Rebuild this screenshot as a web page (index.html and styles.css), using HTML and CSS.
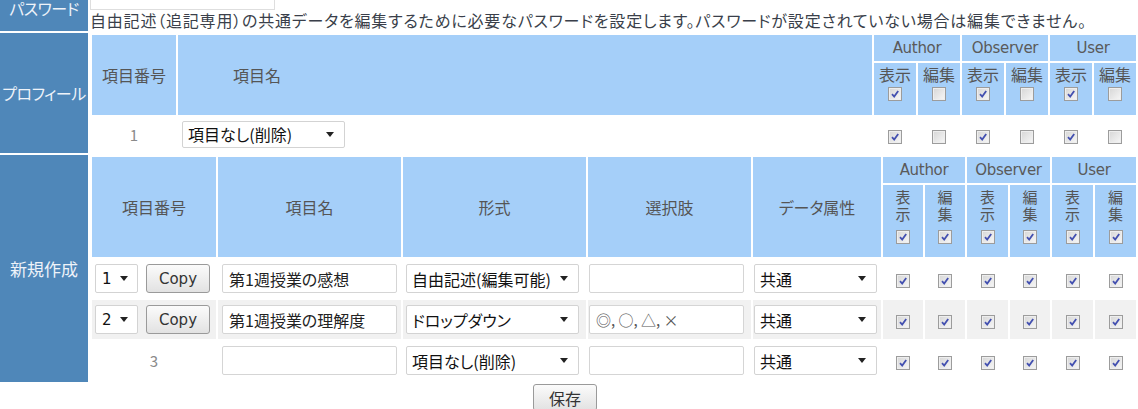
FILE: index.html
```html
<!DOCTYPE html>
<html lang="ja">
<head>
<meta charset="utf-8">
<title>設定</title>
<link rel="stylesheet" href="styles.css">
</head>
<body>
<div class="page">
  <div class="label">パスワード</div>
  <div class="pass-body">
    <div class="pw-input"></div>
    <p class="desc">自由記述（追記専用）の共通データを編集するために必要なパスワードを設定します。パスワードが設定されていない場合は編集できません。</p>
  </div>

  <div class="label">プロフィール</div>
  <div class="body">
    <table class="tbl prof">
      <colgroup>
        <col class="pc-no"><col class="pc-name">
        <col class="pc-cb"><col class="pc-cb"><col class="pc-cb"><col class="pc-cb"><col class="pc-cb"><col class="pc-cb">
      </colgroup>
      <tr class="g-row">
        <th rowspan="2">項目番号</th>
        <th rowspan="2" class="th-left">項目名</th>
        <th colspan="2" class="grp">Author</th>
        <th colspan="2" class="grp">Observer</th>
        <th colspan="2" class="grp">User</th>
      </tr>
      <tr class="ps-row">
        <th class="sub"><div class="sub-txt">表示</div><span class="cb on"><svg viewBox="0 0 12 12"><path d="M3 6.2 L5.2 8.6 L9.2 3"/></svg></span></th>
        <th class="sub"><div class="sub-txt">編集</div><span class="cb"></span></th>
        <th class="sub"><div class="sub-txt">表示</div><span class="cb on"><svg viewBox="0 0 12 12"><path d="M3 6.2 L5.2 8.6 L9.2 3"/></svg></span></th>
        <th class="sub"><div class="sub-txt">編集</div><span class="cb"></span></th>
        <th class="sub"><div class="sub-txt">表示</div><span class="cb on"><svg viewBox="0 0 12 12"><path d="M3 6.2 L5.2 8.6 L9.2 3"/></svg></span></th>
        <th class="sub"><div class="sub-txt">編集</div><span class="cb"></span></th>
      </tr>
      <tr class="pd-row">
        <td class="num">1</td>
        <td class="td-left"><div class="sel w-prof"><span class="sel-txt">項目なし(削除)</span><span class="arr"></span></div></td>
        <td><span class="cb on"><svg viewBox="0 0 12 12"><path d="M3 6.2 L5.2 8.6 L9.2 3"/></svg></span></td>
        <td><span class="cb"></span></td>
        <td><span class="cb on"><svg viewBox="0 0 12 12"><path d="M3 6.2 L5.2 8.6 L9.2 3"/></svg></span></td>
        <td><span class="cb"></span></td>
        <td><span class="cb on"><svg viewBox="0 0 12 12"><path d="M3 6.2 L5.2 8.6 L9.2 3"/></svg></span></td>
        <td><span class="cb"></span></td>
      </tr>
    </table>
  </div>

  <div class="label label-lg">新規作成</div>
  <div class="body">
    <table class="tbl newt">
      <colgroup>
        <col class="nc-no"><col class="nc-name"><col class="nc-fmt"><col class="nc-opt"><col class="nc-attr">
        <col class="nc-a"><col class="nc-a"><col class="nc-b"><col class="nc-a"><col class="nc-b"><col class="nc-b">
      </colgroup>
      <tr class="g-row">
        <th rowspan="2">項目番号</th>
        <th rowspan="2">項目名</th>
        <th rowspan="2">形式</th>
        <th rowspan="2">選択肢</th>
        <th rowspan="2">データ属性</th>
        <th colspan="2" class="grp">Author</th>
        <th colspan="2" class="grp">Observer</th>
        <th colspan="2" class="grp">User</th>
      </tr>
      <tr class="ns-row">
        <th class="sub"><div class="sub-txt v">表<br>示</div><span class="cb on"><svg viewBox="0 0 12 12"><path d="M3 6.2 L5.2 8.6 L9.2 3"/></svg></span></th>
        <th class="sub"><div class="sub-txt v">編<br>集</div><span class="cb on"><svg viewBox="0 0 12 12"><path d="M3 6.2 L5.2 8.6 L9.2 3"/></svg></span></th>
        <th class="sub"><div class="sub-txt v">表<br>示</div><span class="cb on"><svg viewBox="0 0 12 12"><path d="M3 6.2 L5.2 8.6 L9.2 3"/></svg></span></th>
        <th class="sub"><div class="sub-txt v">編<br>集</div><span class="cb on"><svg viewBox="0 0 12 12"><path d="M3 6.2 L5.2 8.6 L9.2 3"/></svg></span></th>
        <th class="sub"><div class="sub-txt v">表<br>示</div><span class="cb on"><svg viewBox="0 0 12 12"><path d="M3 6.2 L5.2 8.6 L9.2 3"/></svg></span></th>
        <th class="sub"><div class="sub-txt v">編<br>集</div><span class="cb on"><svg viewBox="0 0 12 12"><path d="M3 6.2 L5.2 8.6 L9.2 3"/></svg></span></th>
      </tr>
      <tr class="nd-row">
        <td class="td-left"><div class="nobox"><div class="sel w-num"><span class="sel-txt">1</span><span class="arr"></span></div><button class="btn">Copy</button></div></td>
        <td class="td-left"><input class="inp w-name" value="第1週授業の感想"></td>
        <td class="td-left"><div class="sel w-fmt"><span class="sel-txt">自由記述(編集可能)</span><span class="arr"></span></div></td>
        <td class="td-left"><input class="inp w-opt" value=""></td>
        <td class="td-left"><div class="sel w-attr"><span class="sel-txt">共通</span><span class="arr"></span></div></td>
        <td><span class="cb on"><svg viewBox="0 0 12 12"><path d="M3 6.2 L5.2 8.6 L9.2 3"/></svg></span></td>
        <td><span class="cb on"><svg viewBox="0 0 12 12"><path d="M3 6.2 L5.2 8.6 L9.2 3"/></svg></span></td>
        <td><span class="cb on"><svg viewBox="0 0 12 12"><path d="M3 6.2 L5.2 8.6 L9.2 3"/></svg></span></td>
        <td><span class="cb on"><svg viewBox="0 0 12 12"><path d="M3 6.2 L5.2 8.6 L9.2 3"/></svg></span></td>
        <td><span class="cb on"><svg viewBox="0 0 12 12"><path d="M3 6.2 L5.2 8.6 L9.2 3"/></svg></span></td>
        <td><span class="cb on"><svg viewBox="0 0 12 12"><path d="M3 6.2 L5.2 8.6 L9.2 3"/></svg></span></td>
      </tr>
      <tr class="nd-row alt">
        <td class="td-left"><div class="nobox"><div class="sel w-num"><span class="sel-txt">2</span><span class="arr"></span></div><button class="btn">Copy</button></div></td>
        <td class="td-left"><input class="inp w-name" value="第1週授業の理解度"></td>
        <td class="td-left"><div class="sel w-fmt"><span class="sel-txt">ドロップダウン</span><span class="arr"></span></div></td>
        <td class="td-left"><input class="inp w-opt sym" value="◎, ○, △, ×"></td>
        <td class="td-left"><div class="sel w-attr"><span class="sel-txt">共通</span><span class="arr"></span></div></td>
        <td><span class="cb on"><svg viewBox="0 0 12 12"><path d="M3 6.2 L5.2 8.6 L9.2 3"/></svg></span></td>
        <td><span class="cb on"><svg viewBox="0 0 12 12"><path d="M3 6.2 L5.2 8.6 L9.2 3"/></svg></span></td>
        <td><span class="cb on"><svg viewBox="0 0 12 12"><path d="M3 6.2 L5.2 8.6 L9.2 3"/></svg></span></td>
        <td><span class="cb on"><svg viewBox="0 0 12 12"><path d="M3 6.2 L5.2 8.6 L9.2 3"/></svg></span></td>
        <td><span class="cb on"><svg viewBox="0 0 12 12"><path d="M3 6.2 L5.2 8.6 L9.2 3"/></svg></span></td>
        <td><span class="cb on"><svg viewBox="0 0 12 12"><path d="M3 6.2 L5.2 8.6 L9.2 3"/></svg></span></td>
      </tr>
      <tr class="nd-row">
        <td class="num">3</td>
        <td class="td-left"><input class="inp w-name" value=""></td>
        <td class="td-left"><div class="sel w-fmt"><span class="sel-txt">項目なし(削除)</span><span class="arr"></span></div></td>
        <td class="td-left"><input class="inp w-opt" value=""></td>
        <td class="td-left"><div class="sel w-attr"><span class="sel-txt">共通</span><span class="arr"></span></div></td>
        <td><span class="cb on"><svg viewBox="0 0 12 12"><path d="M3 6.2 L5.2 8.6 L9.2 3"/></svg></span></td>
        <td><span class="cb on"><svg viewBox="0 0 12 12"><path d="M3 6.2 L5.2 8.6 L9.2 3"/></svg></span></td>
        <td><span class="cb on"><svg viewBox="0 0 12 12"><path d="M3 6.2 L5.2 8.6 L9.2 3"/></svg></span></td>
        <td><span class="cb on"><svg viewBox="0 0 12 12"><path d="M3 6.2 L5.2 8.6 L9.2 3"/></svg></span></td>
        <td><span class="cb on"><svg viewBox="0 0 12 12"><path d="M3 6.2 L5.2 8.6 L9.2 3"/></svg></span></td>
        <td><span class="cb on"><svg viewBox="0 0 12 12"><path d="M3 6.2 L5.2 8.6 L9.2 3"/></svg></span></td>
      </tr>
    </table>
  </div>
</div>
<div class="save-row"><button class="btn save">保存</button></div>
</body>
</html>
```

FILE: styles.css
```css
* { box-sizing: border-box; }
html, body { margin: 0; padding: 0; background: #fff; }
body {
  font-family: "Noto Sans CJK JP", "Noto Sans", sans-serif;
  font-size: 16px;
  color: #333;
  font-feature-settings: "palt";
  overflow: hidden;
}
.page {
  display: grid;
  grid-template-columns: 88px 1048px;
  gap: 2px;
  margin-top: -16px;
}
.label {
  background: #4f87b9;
  color: #eef3f9;
  display: flex;
  align-items: center;
  justify-content: center;
  font-size: 16px;
  letter-spacing: -0.5px;
}
.label-lg { font-size: 17px; letter-spacing: 0; }
.pass-body { padding-top: 2px; }
.pw-input {
  width: 185px;
  height: 24px;
  border: 1px solid #dedede;
  background: #fff;
}
.desc {
  margin: 0;
  font-size: 16px;
  line-height: 21px;
  color: #3a3f4a;
  letter-spacing: 0.8px;
  white-space: nowrap;
}
.tbl {
  border-collapse: separate;
  border-spacing: 2px;
  table-layout: fixed;
  width: 1048px;
}
.tbl th {
  background: #a5cff9;
  color: #555;
  font-weight: normal;
  padding: 0;
  text-align: center;
  vertical-align: middle;
  font-size: 16px;
}
.tbl td {
  padding: 0;
  text-align: center;
  vertical-align: middle;
}
.tbl .th-left { text-align: left; padding-left: 55px; }
.tbl .td-left { text-align: left; padding-left: 3px; }
.tbl th.grp {
  font-family: "DejaVu Sans", sans-serif;
  font-size: 15px;
  color: #5a5a5a;
  letter-spacing: -0.3px;
}
.tbl th.sub { vertical-align: top; }
.sub-txt { line-height: 20px; padding-top: 1px; }
.sub-txt.v { font-size: 15px; line-height: 17px; padding-top: 3px; margin-bottom: 8px; }

.pc-no { width: 84px; }
.pc-name { width: 694px; }
.pc-cb { width: 42px; }

.nc-no { width: 124px; }
.nc-name { width: 183px; }
.nc-fmt { width: 183px; }
.nc-opt { width: 163px; }
.nc-attr { width: 128px; }
.nc-a { width: 40px; }
.nc-b { width: 41px; }

.g-row { height: 26px; }
.ps-row { height: 52px; }
.pd-row { height: 34px; }
.ns-row { height: 72px; }
.nd-row { height: 39px; }
.nd-row.alt td { background: #f1f1f1; }

.num { color: #8a8a8a; font-size: 15px; }

.cb {
  display: inline-block;
  width: 14px;
  height: 14px;
  border: 1px solid #9c9c9c;
  background: linear-gradient(135deg, #d6d6d6, #f7f7f7);
  box-shadow: inset 0 0 0 1px #eeeeee;
  vertical-align: middle;
}
.cb svg {
  display: block;
  width: 12px;
  height: 12px;
  fill: none;
  stroke: #4350b0;
  stroke-width: 1.8;
}
.sub .cb { display: block; margin: 3px auto 0; }

.sel {
  display: flex;
  align-items: center;
  height: 27px;
  border: 1px solid #d3d3d3;
  border-radius: 2px;
  background: #fff;
  padding: 0 10px 0 5px;
  color: #111;
  font-size: 16px;
}
.sel-txt {
  flex: 1;
  overflow: hidden;
  white-space: nowrap;
}
.arr {
  width: 0;
  height: 0;
  border-left: 4px solid transparent;
  border-right: 4px solid transparent;
  border-top: 5px solid #222;
  margin-left: 6px;
}
.w-prof { width: 163px; margin-left: 1px; }
.w-num { width: 43px; height: 29px; font-family: "DejaVu Sans", sans-serif; font-size: 15px; padding-left: 6px; padding-right: 9px; }
.w-fmt { width: 173px; height: 29px; }
.w-attr { width: 123px; height: 29px; margin-left: -2px; }

.nobox { display: flex; align-items: center; gap: 8px; }

.inp {
  display: block;
  height: 29px;
  border: 1px solid #d5d5d5;
  border-radius: 2px;
  background: #fff;
  padding: 0 6px;
  font: inherit;
  font-size: 16px;
  color: #222;
  outline: none;
}
.w-name { width: 175px; margin-left: 1px; }
.w-opt { width: 155px; margin-left: -2px; }
.inp.sym { color: #555; font-size: 15px; }

.btn {
  height: 29px;
  width: 64px;
  border: 1px solid #9a9a9a;
  border-radius: 3px;
  background: linear-gradient(#fbfbfb, #e2e2e2);
  font-family: "DejaVu Sans", sans-serif;
  font-size: 15px;
  color: #333;
  padding: 0;
}
.save-row {
  display: flex;
  justify-content: center;
  padding-top: 2px;
  padding-right: 8px;
}
.btn.save {
  height: 27px;
  font-family: "Noto Sans CJK JP", sans-serif;
  font-size: 16px;
}
```
